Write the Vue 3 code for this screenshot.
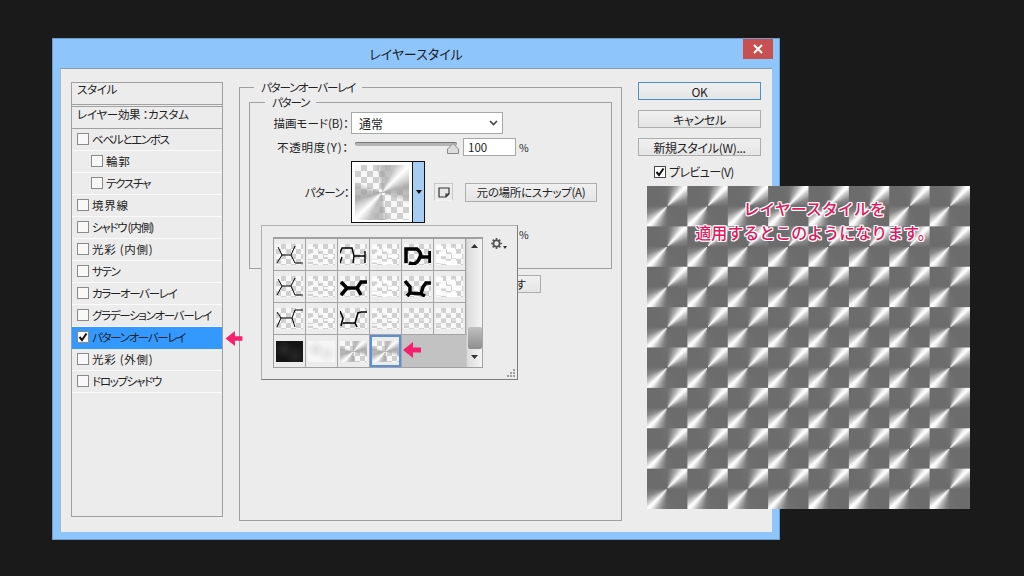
<script setup>
// left column of the dialog
const effects = [
  { label: 'ベベルとエンボス' },
  { label: '輪郭', sub: true, kanji: true },
  { label: 'テクスチャ', sub: true },
  { label: '境界線', kanji: true },
  { label: 'シャドウ (内側)' },
  { label: '光彩 (内側)', kanji: true },
  { label: 'サテン' },
  { label: 'カラーオーバーレイ' },
  { label: 'グラデーションオーバーレイ' },
  { label: 'パターンオーバーレイ', on: true },
  { label: '光彩 (外側)', kanji: true },
  { label: 'ドロップシャドウ' }
]

// pattern picker cells, drawn in a 27x21 patch
const blots = 'M3 9 H10 M14 11 H22 M6 15 H13 M19 17 H29 M3 22 H9 M13 24 H24'
const tiles = [
  { d: 'M5 8 L9 16 L4 24 M9 16 L18 16 M22 7 L18 16 L22 24 L30 24', sw: 1 },
  { d: blots, sw: 1.5, white: true },
  { d: 'M3 14 L5 9 L15 9 L17 17 L28 17 M17 17 L16 24 M28 12 L28 24 M3 24 L5 18', sw: 1.4 },
  { d: blots, sw: 3, white: true },
  { d: 'M5 24 L5 10 L16 10 Q21 14 19 18 L29 18 M29 12 L29 24 M8 24 Q16 27 19 18', sw: 3.5 },
  { d: blots, sw: 4.5, white: true },
  { d: 'M5 8 L9 15 L4 24 M9 15 L18 15 M22 7 L18 15 L22 24 L30 24', sw: 1 },
  { d: blots, sw: 1.5, white: true },
  { d: 'M4 11 L10 17 L20 17 L24 11 L30 11 M10 17 L4 24 M20 17 L24 24', sw: 3.5 },
  { d: blots, sw: 3, white: true },
  { d: 'M4 10 L9 16 L9 22 L20 23 L22 16 L25 12 L31 12 M20 23 L24 25 M9 22 L6 25', sw: 3.5 },
  { d: blots, sw: 5, white: true },
  { d: 'M4 9 L8 15 L4 24 M8 15 L19 15 L22 7 L30 7 M19 15 L22 24', sw: 1 },
  { d: blots, sw: 1.5, white: true },
  { d: 'M3 8 L6 15 L4 23 M6 20 L18 20 L21 10 L24 9 M24 9 L30 9 M18 20 L20 24', sw: 1.6 },
  { d: blots, sw: 1.5, white: true },
  { d: blots, sw: 0.6, white: true },
  { d: blots, sw: 0.6, white: true },
  { kind: 'dark' },
  { kind: 'pale' },
  { kind: 'metal' },
  { kind: 'metal', selected: true }
]
</script>

<template>
  <div class="desktop">
    <div class="window">
      <div class="titlebar">
        <span class="title">レイヤースタイル</span>
        <button class="close">
          <svg width="10" height="10" viewBox="0 0 10 10">
            <path d="M1 1 L9 9 M9 1 L1 9" stroke="#fff" stroke-width="2" fill="none" />
          </svg>
        </button>
      </div>

      <div class="client">
        <div class="styles">
          <div class="styles-head">スタイル</div>
          <div class="styles-head second">レイヤー効果 ：カスタム</div>
          <div
            v-for="item in effects"
            :key="item.label"
            class="effect"
            :class="{ sub: item.sub, on: item.on, kanji: item.kanji }"
          >
            <span class="check">
              <svg v-if="item.on" width="10" height="10" viewBox="0 0 10 10">
                <path d="M1.5 5 L4 8 L8.5 1.5" stroke="#1a1016" stroke-width="2" fill="none" />
              </svg>
            </span>
            {{ item.label }}
          </div>
        </div>

        <fieldset class="outer">
          <legend>パターンオーバーレイ</legend>
          <fieldset class="inner">
            <legend>パターン</legend>
            <div class="row mode">
              <label>描画モード(B)：</label>
              <div class="select">
                通常
                <svg width="9" height="6" viewBox="0 0 9 6">
                  <path d="M1 1 L4.5 4.5 L8 1" stroke="#444" stroke-width="1.6" fill="none" />
                </svg>
              </div>
            </div>
            <div class="row opacity">
              <label>不透明度(Y)：</label>
              <div class="slider">
                <div class="track"></div>
                <svg class="handle" width="12" height="11" viewBox="0 0 12 11">
                  <path d="M6 .5 L11.5 6 V10.5 H.5 V6 Z" fill="#dcdcdc" stroke="#8a8a8a" />
                </svg>
              </div>
              <div class="field">100</div>
              <span class="unit">%</span>
            </div>
            <div class="row pattern">
              <label>パターン：</label>
              <div class="swatch">
                <div class="swatch-img metal"></div>
                <div class="swatch-arrow"></div>
              </div>
              <div class="pattern-actions">
                <button class="icon-btn">
                  <svg width="12" height="11" viewBox="0 0 12 11">
                    <path d="M1 1 H11 V7 L8 10 H1 Z M8 10 V7 H11" fill="#e8e8e8" stroke="#333" stroke-width="1.2" />
                  </svg>
                </button>
                <button class="btn snap">元の場所にスナップ(A)</button>
              </div>
            </div>
            <div class="row scale">
              <label>比率(C)：</label>
              <div class="scale-bar"></div>
              <span class="unit">%</span>
            </div>
          </fieldset>
          <div class="defaults">
            <button class="btn">初期設定に戻す</button>
          </div>
        </fieldset>

        <div class="actions">
          <button class="btn wide primary">OK</button>
          <button class="btn wide">キャンセル</button>
          <button class="btn wide">新規スタイル(W)...</button>
          <div class="preview">
            <span class="check dark">
              <svg width="10" height="10" viewBox="0 0 10 10">
                <path d="M1.5 5 L4 8 L8.5 1.5" stroke="#111" stroke-width="2" fill="none" />
              </svg>
            </span>
            プレビュー(V)
          </div>
        </div>
      </div>

      <div class="popup">
        <div class="picker">
          <div class="grid">
            <div
              v-for="(tile, i) in tiles"
              :key="i"
              class="cell"
              :class="{ selected: tile.selected }"
            >
              <div v-if="tile.kind" class="patch" :class="tile.kind"></div>
              <svg v-else class="patch" width="27" height="21" viewBox="3 5 27 21">
                <path :d="tile.d" :stroke="tile.white ? '#fff' : '#000'" :stroke-width="tile.sw" fill="none" />
              </svg>
            </div>
          </div>
          <div class="scrollbar">
            <svg width="7" height="4" viewBox="0 0 7 4"><path d="M0 4 L3.5 0 L7 4 Z" fill="#333" /></svg>
            <div class="thumb"></div>
            <svg width="7" height="4" viewBox="0 0 7 4"><path d="M0 0 L3.5 4 L7 0 Z" fill="#333" /></svg>
          </div>
        </div>
        <div class="gear">
          <svg width="11" height="11" viewBox="0 0 13 13">
            <circle cx="6.5" cy="6.5" r="3.6" fill="none" stroke="#555" stroke-width="2" />
            <path d="M6.5 0 V2.5 M6.5 10.5 V13 M0 6.5 H2.5 M10.5 6.5 H13 M2 2 L3.7 3.7 M9.3 9.3 L11 11 M11 2 L9.3 3.7 M3.7 9.3 L2 11" stroke="#555" stroke-width="2" />
          </svg>
          <svg width="4" height="3" viewBox="0 0 4 3"><path d="M0 0 H4 L2 3 Z" fill="#333" /></svg>
        </div>
        <svg class="grip" width="10" height="10" viewBox="0 0 10 10">
          <path d="M7 1 h2 v2 h-2 Z M4 4 h2 v2 h-2 Z M7 4 h2 v2 h-2 Z M1 7 h2 v2 h-2 Z M4 7 h2 v2 h-2 Z M7 7 h2 v2 h-2 Z" fill="#a0a0a0" />
        </svg>
        <svg class="arrow arrow-pick" width="18" height="16" viewBox="0 0 18 16">
          <path d="M0 8 L10 0 V5.5 H18 V10.5 H10 V16 Z" fill="#f5206e" />
        </svg>
      </div>

      <svg class="arrow arrow-row" width="18" height="15" viewBox="0 0 18 16">
        <path d="M0 8 L10 0 V5.5 H18 V10.5 H10 V16 Z" fill="#f5206e" />
      </svg>
    </div>

    <div class="result">
      <p>レイヤースタイルを</p>
      <p>適用するとこのようになります。</p>
    </div>
  </div>
</template>

<style>
body {
  background: #1a1a1a;
}
</style>

<style scoped>
.desktop {
  position: relative;
  width: 1024px;
  height: 576px;
  overflow: hidden;
  background: #1a1a1a;
  font-family: "Noto Sans CJK JP", "Liberation Sans", sans-serif;
  font-size: 11.5px;
  font-feature-settings: "palt";
  color: #222;
}

.window {
  position: absolute;
  left: 52px;
  top: 38px;
  width: 728px;
  height: 502px;
  background: #8ec5fb;
  box-shadow: inset 0 0 0 1px #6f9ccb;
}

.titlebar {
  height: 30px;
  display: flex;
  align-items: center;
  justify-content: center;
}

.title {
  font-size: 13px;
  color: #1c1c1c;
  margin-top: 1px;
}

.close {
  position: absolute;
  right: 7px;
  top: 1px;
  width: 30px;
  height: 20px;
  padding: 0;
  border: 0;
  background: #c75050;
  display: flex;
  align-items: center;
  justify-content: center;
}

.client {
  margin: 0 8px;
  height: 464px;
  box-sizing: border-box;
  padding: 14px 0 0 10px;
  display: flex;
  align-items: flex-start;
  background: #ececec;
  border-top: 1px solid #8b9bb0;
  border-left: 1px solid #a8b8c8;
}

.styles {
  width: 152px;
  height: 435px;
  box-sizing: border-box;
  border: 1px solid #a0a0a0;
  margin-top: -1px;
  flex: none;
}

.styles-head {
  height: 21px;
  line-height: 13px;
  padding: 0 5px;
  border-bottom: 1px solid #a0a0a0;
  letter-spacing: -0.3px;
}

.styles-head.second {
  margin-top: 1px;
  height: 21px;
  line-height: 14px;
  border-top: 1px solid #a0a0a0;
}

.effect {
  height: 22px;
  box-sizing: border-box;
  display: flex;
  align-items: center;
  gap: 3px;
  padding: 0 0 2px 5px;
  border-bottom: 1px solid #fafafa;
  white-space: nowrap;
  letter-spacing: -1.3px;
}

.effect.kanji {
  letter-spacing: 0.7px;
}

.effect.sub {
  padding-left: 19px;
}

.effect.on {
  background: #3399ff;
  border-bottom-color: #3399ff;
}

.check {
  width: 12px;
  height: 12px;
  box-sizing: border-box;
  border: 1px solid #8a8a8a;
  background: #f8f8f8;
  display: flex;
  align-items: center;
  justify-content: center;
  flex: none;
}

.check.dark {
  border-color: #444;
  background: #fff;
}

fieldset {
  margin: 0;
  border: 1px solid #a0a0a0;
  box-sizing: border-box;
}

legend {
  padding: 0 7px;
  line-height: 12px;
  font-size: 11.5px;
  letter-spacing: -1.2px;
}

.outer {
  width: 383px;
  height: 440px;
  margin: -2px 16px 0;
  padding: 0 9px;
  flex: none;
}

.outer > legend {
  margin-left: 5px;
}

.inner {
  margin-top: 3px;
  height: 173px;
  padding: 4px 0 0;
}

.inner > legend {
  margin-left: 15px;
}

.row {
  display: flex;
  align-items: center;
}

.row label {
  width: 99px;
  flex: none;
  margin-right: 2px;
  text-align: right;
  white-space: nowrap;
}

.mode {
  height: 22px;
}

.select {
  width: 152px;
  height: 22px;
  box-sizing: border-box;
  border: 1px solid #a8a8a8;
  background: #fff;
  display: flex;
  align-items: center;
  justify-content: space-between;
  padding: 0 4px 0 7px;
  font-size: 12px;
}

.opacity {
  height: 18px;
  margin-top: 4px;
}

.opacity label {
  letter-spacing: 0.8px;
}

.slider {
  position: relative;
  width: 104px;
  height: 18px;
  margin: 0 4px;
}

.track {
  position: absolute;
  left: 0;
  right: 2px;
  top: 4px;
  height: 4px;
  border-radius: 2px;
  background: #b5b5b5;
  box-shadow: inset 0 1px 0 #777;
}

.handle {
  position: absolute;
  right: 0;
  top: 5px;
}

.field {
  width: 53px;
  height: 18px;
  box-sizing: border-box;
  border: 1px solid #a8a8a8;
  background: #fff;
  padding-left: 4px;
  line-height: 16px;
}

.unit {
  margin-left: 3px;
  font-size: 10.5px;
}

.pattern {
  height: 62px;
  margin-top: 5px;
}

.pattern label {
  letter-spacing: -0.7px;
}

.swatch {
  display: flex;
  height: 62px;
  box-sizing: border-box;
  border: 1px solid #111;
}

.swatch-img {
  width: 60px;
  height: 60px;
  box-sizing: border-box;
  border: 3px solid #fff;
  border-bottom-width: 2px;
}

.swatch-arrow {
  width: 11px;
  border-left: 1px solid #111;
  background: #a8cdf2;
  position: relative;
}

.swatch-arrow::after {
  content: "";
  position: absolute;
  left: 3px;
  top: 28px;
  border: 3px solid transparent;
  border-top: 4px solid #111;
  border-bottom: 0;
}

.pattern-actions {
  display: flex;
  align-items: flex-start;
  height: 62px;
  padding-top: 22px;
  box-sizing: border-box;
  margin-left: 9px;
}

.icon-btn {
  width: 19px;
  height: 18px;
  padding: 0;
  border: 1px solid #c8c8c8;
  border-bottom-color: #f4f4f4;
  background: #ececec;
  display: flex;
  align-items: center;
  justify-content: center;
}

.btn {
  font: inherit;
  font-size: 11.5px;
  color: #222;
  border: 1px solid #adadad;
  background: linear-gradient(#f0f0f0, #e5e5e5);
  padding: 0;
  height: 18px;
  line-height: 15px;
  white-space: nowrap;
}

.snap {
  width: 132px;
  height: 19px;
  margin-left: 12px;
  letter-spacing: -0.3px;
}

.scale {
  height: 18px;
  margin-top: 2px;
}

.scale-bar {
  width: 165px;
}

.defaults {
  display: flex;
  justify-content: flex-end;
  padding-right: 71px;
  margin-top: 6px;
}

.defaults .btn {
  width: 110px;
  padding: 0 0 0 1px;
}

.actions {
  width: 123px;
  flex: none;
  display: flex;
  flex-direction: column;
  gap: 10px;
  margin-top: -1px;
}

.wide {
  width: 123px;
  font-size: 12px;
  letter-spacing: -0.3px;
}

.primary {
  border-color: #4a8fd4;
}

.preview {
  display: flex;
  align-items: center;
  gap: 3px;
  height: 12px;
  line-height: 12px;
  padding-left: 16px;
  font-size: 12px;
  letter-spacing: -0.6px;
}

.popup {
  position: absolute;
  left: 209px;
  top: 187px;
  width: 257px;
  height: 155px;
  box-sizing: border-box;
  padding: 11px;
  display: flex;
  gap: 6px;
  background: #ececec;
  border: 1px solid #b0b0b0;
  border-right-color: #7c7c7c;
  border-bottom-color: #7c7c7c;
}

.picker {
  display: flex;
  flex: none;
  height: 131px;
  border-top: 2px solid #a0a0a0;
  border-bottom: 1px solid #a0a0a0;
  border-left: 1px solid #a0a0a0;
  box-sizing: border-box;
}

.grid {
  width: 192px;
  display: grid;
  grid-template-columns: repeat(6, 32px);
  grid-auto-rows: 32px;
  background: #c2c2c2;
}

.cell {
  box-sizing: border-box;
  border-right: 1px solid #a5a5a5;
  border-bottom: 1px solid #a5a5a5;
  background: #ececec;
  display: flex;
  align-items: center;
  justify-content: center;
}

.cell:nth-last-child(-n + 4) {
  border-bottom: 0;
}

.cell.selected {
  box-shadow: inset 0 0 0 2px #5b8fd9;
}

.patch {
  width: 27px;
  height: 21px;
  background: repeating-conic-gradient(#d0d0d0 0 90deg, #f8f8f8 90deg 180deg) 0 0 / 10px 10px;
}

.patch.dark {
  background: radial-gradient(circle at 30% 40%, #2a2a2a, transparent 40%), radial-gradient(circle at 70% 70%, #262626, transparent 45%), #151515;
}

.patch.pale {
  background: radial-gradient(circle at 30% 40%, #e0e0e0, transparent 40%), radial-gradient(circle at 70% 60%, #e4e4e4, transparent 40%), #f6f6f6;
}

.metal {
  background:
    repeating-conic-gradient(rgba(150, 150, 150, 0.6) 0deg, rgba(190, 190, 190, 0.9) 25deg, #fff 45deg, rgba(170, 170, 170, 0.9) 75deg, rgba(150, 150, 150, 0.6) 95deg, rgba(255, 255, 255, 0) 115deg, rgba(255, 255, 255, 0) 165deg, rgba(150, 150, 150, 0.6) 180deg),
    repeating-conic-gradient(#cfcfcf 0 90deg, #f8f8f8 90deg 180deg) 0 0 / 12px 12px;
}

.patch.metal {
  background:
    repeating-conic-gradient(rgba(150, 150, 150, 0.6) 0deg, rgba(190, 190, 190, 0.9) 25deg, #fff 45deg, rgba(170, 170, 170, 0.9) 75deg, rgba(150, 150, 150, 0.6) 95deg, rgba(255, 255, 255, 0) 115deg, rgba(255, 255, 255, 0) 165deg, rgba(150, 150, 150, 0.6) 180deg),
    repeating-conic-gradient(#cfcfcf 0 90deg, #f8f8f8 90deg 180deg) 0 0 / 10px 10px;
}

.scrollbar {
  width: 17px;
  height: 128px;
  box-sizing: border-box;
  border-left: 1px solid #c8c8c8;
  border-right: 1px solid #a5a5a5;
  background: linear-gradient(90deg, #dcdcdc, #f4f4f4);
  display: flex;
  flex-direction: column;
  align-items: center;
  padding: 5px 0 8px;
}

.thumb {
  width: 14px;
  height: 22px;
  margin-top: auto;
  margin-bottom: 6px;
  border-radius: 2px;
  background: linear-gradient(#c0c0c0, #8e8e8e);
}

.gear {
  display: flex;
  align-items: flex-end;
  gap: 1px;
  height: 11px;
  margin: 1px 0 0 2px;
}

.grip {
  position: absolute;
  right: 1px;
  bottom: 1px;
}

.arrow {
  position: absolute;
}

.arrow-row {
  left: 173px;
  top: 293px;
}

.arrow-pick {
  left: 141px;
  top: 116px;
}

.result {
  position: absolute;
  left: 647px;
  top: 186px;
  width: 323px;
  height: 323px;
  box-sizing: border-box;
  padding: 10px 0 0 12px;
  background: repeating-conic-gradient(#707070 0deg, #828282 12deg, #b4b4b4 28deg, #f6f6f6 40deg, #ffffff 45deg, #c8c8c8 54deg, #888888 70deg, #6c6c6c 92deg, #6c6c6c 150deg, #707070 180deg) 0 0 / 40.375px 40.375px;
  text-align: center;
  font-size: 16px;
  font-weight: 500;
  font-feature-settings: normal;
  color: #e0185c;
  text-shadow: 1px 0 0 #fff, -1px 0 0 #fff, 0 1px 0 #fff, 0 -1px 0 #fff, 1px 1px 0 #fff, -1px -1px 0 #fff, 1px -1px 0 #fff, -1px 1px 0 #fff;
}

.result p {
  margin: 0;
  line-height: 24px;
}
</style>
